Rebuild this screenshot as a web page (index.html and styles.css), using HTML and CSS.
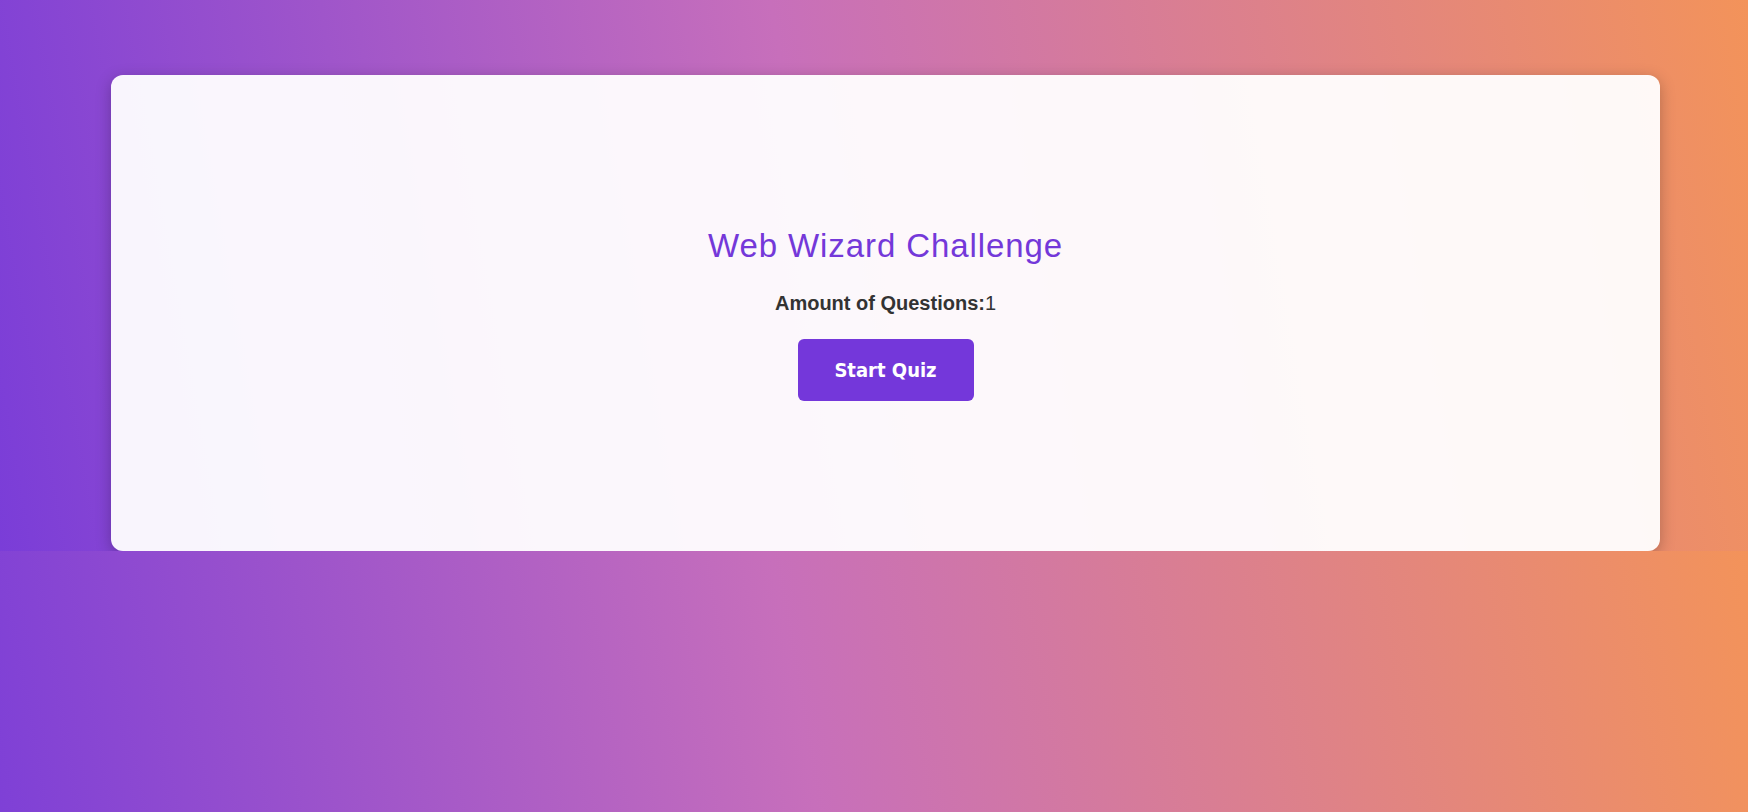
FILE: index.html
```html
<!DOCTYPE html>
<html lang="en">
<head>
<meta charset="utf-8">
<title>Web Wizard Challenge</title>
<link rel="stylesheet" href="styles.css">
</head>
<body>
  <main class="card">
    <h1 class="title">Web Wizard Challenge</h1>
    <p class="amount"><strong>Amount of Questions:</strong>1</p>
    <button class="start-btn" type="button">Start Quiz</button>
  </main>
</body>
</html>
```

FILE: styles.css
```css
html {
  margin: 0;
}

body {
  margin: 0;
  padding: 75px 88px 0 111px;
  font-family: "Liberation Sans", Arial, sans-serif;
  background: linear-gradient(80deg, #7a3dd8 0%, #c76fbb 47%, #f3935a 100%);
}

.card {
  box-sizing: border-box;
  min-height: 476px;
  background: rgba(255, 255, 255, 0.95);
  border-radius: 12px;
  box-shadow: 0 4px 15px rgba(0, 0, 0, 0.25);
  display: flex;
  flex-direction: column;
  align-items: center;
  justify-content: center;
  padding-top: 1px;
}

.title {
  margin: 0 0 27px;
  font-size: 33px;
  font-weight: normal;
  letter-spacing: 0.9px;
  color: #7438d9;
  line-height: 38px;
}

.amount {
  margin: 0 0 24px;
  font-size: 20px;
  line-height: 23px;
  color: #333333;
}

.amount strong {
  font-weight: bold;
}

.start-btn {
  box-sizing: border-box;
  width: 176px;
  height: 62px;
  padding: 0;
  border: none;
  border-radius: 6px;
  background: #7437da;
  color: #ffffff;
  font-family: "DejaVu Sans", sans-serif;
  font-stretch: condensed;
  font-weight: bold;
  font-size: 20px;
  cursor: pointer;
}
```
